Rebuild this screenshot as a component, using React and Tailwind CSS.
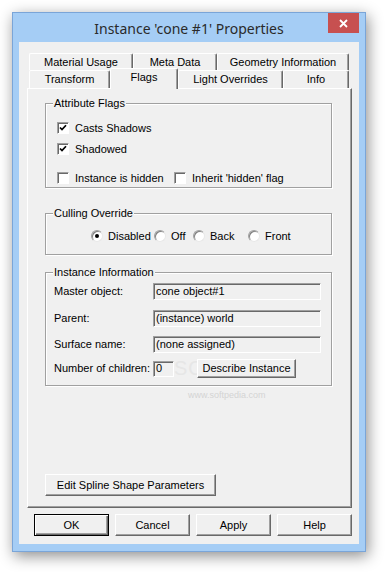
import React from 'react';

// Classic Win32 property sheet inside a Windows 8 frame

const raised =
  'border border-t-white border-l-white border-r-[#696969] border-b-[#696969] shadow-[inset_-1px_-1px_0_#a0a0a0] bg-[#f0f0f0]';
const sunken =
  'border border-t-[#a0a0a0] border-l-[#a0a0a0] border-r-white border-b-white shadow-[inset_1px_1px_0_#696969]';

function CheckBox({ checked, label, className = '' }) {
  return (
    <div className={`flex items-center h-[14px] ${className}`}>
      <div className={`w-[12px] h-[12px] bg-white flex items-center justify-center ${sunken}`}>
        {checked && (
          <svg width="8" height="8" viewBox="0 0 8 8">
            <path d="M1 3.5 L3 5.6 L7 1.2" fill="none" stroke="#000" strokeWidth="1.7" />
          </svg>
        )}
      </div>
      <span className="ml-[6px]">{label}</span>
    </div>
  );
}

function Radio({ checked, label, className = '' }) {
  return (
    <div className={`flex items-center h-[14px] ${className}`}>
      <div className="w-[12px] h-[12px] rounded-full bg-white border border-t-[#a0a0a0] border-l-[#a0a0a0] border-r-[#e8e8e8] border-b-[#e8e8e8] shadow-[inset_1px_1px_0_#808080] flex items-center justify-center">
        {checked && <div className="w-[4px] h-[4px] rounded-full bg-black" />}
      </div>
      <span className="ml-[5px]">{label}</span>
    </div>
  );
}

function GroupBox({ title, className = '', children }) {
  return (
    <div className={`relative w-[287px] border border-[#a0a0a0] shadow-[1px_1px_0_#fff,inset_1px_1px_0_#fff] ${className}`}>
      <span className="absolute -top-[7px] left-[7px] px-[1px] bg-[#f0f0f0] leading-[13px]">{title}</span>
      {children}
    </div>
  );
}

function Field({ value, className = '' }) {
  return (
    <div className={`h-[17px] bg-[#f0f0f0] pl-[2px] flex items-center leading-none ${sunken} ${className}`}>
      {value}
    </div>
  );
}

function Tab({ label, width, selected }) {
  return (
    <div
      className={`flex items-center justify-center border-t border-l border-r border-t-white border-l-white border-r-[#696969] rounded-t-[2px] shadow-[inset_-1px_0_0_#a0a0a0] bg-[#f0f0f0] ${
        selected ? 'h-[21px] -mb-[1px] relative z-10 pb-[3px]' : 'h-full'
      }`}
      style={{ width }}
    >
      {label}
    </div>
  );
}

export default function App() {
  return (
    <div
      className="w-[386px] h-[572px] bg-white pt-[12px] pl-[12px] text-[11px] text-black"
      style={{ fontFamily: '"Liberation Sans", Arial, sans-serif' }}
    >
      {/* Window frame */}
      <div className="w-[354px] h-[540px] border border-[#7aa5d8] bg-[#a5cdf5] shadow-[2px_4px_14px_rgba(0,0,0,0.45)] flex flex-col">
        {/* Title bar */}
        <div className="relative h-[29px] flex items-center justify-center pt-[2px]">
          <span className="text-[14px] text-[#2a2a2a]" style={{ fontFamily: '"Noto Sans", "Open Sans", sans-serif' }}>
            Instance 'cone #1' Properties
          </span>
          <div className="absolute top-0 right-[6px] w-[31px] h-[20px] bg-[#c75050] flex items-center justify-center">
            <svg width="9" height="9" viewBox="0 0 9 9">
              <path d="M1 1 L8 8 M8 1 L1 8" stroke="#fff" strokeWidth="1.8" />
            </svg>
          </div>
        </div>

        {/* Client area */}
        <div className="mx-[6px] h-[502px] bg-[#f0f0f0] pl-[8px] pt-[11px]">
          {/* Tabs */}
          <div className="flex pl-[2px] h-[17px]">
            <Tab label="Material Usage" width={104} />
            <Tab label="Meta Data" width={84} />
            <Tab label="Geometry Information" width={132} />
          </div>
          <div className="flex pl-[2px] h-[18px] items-end">
            <Tab label="Transform" width={81} />
            <Tab label="Flags" width={68} selected />
            <Tab label="Light Overrides" width={105} />
            <Tab label="Info" width={66} />
          </div>

          {/* Tab page */}
          <div className={`relative w-[325px] h-[420px] pl-[17px] pt-[14px] ${raised}`}>
            <GroupBox title="Attribute Flags" className="h-[85px] pl-[11px] pt-[17px]">
              <CheckBox checked label="Casts Shadows" />
              <CheckBox checked label="Shadowed" className="mt-[7px]" />
              <div className="flex mt-[15px]">
                <CheckBox label="Instance is hidden" className="w-[117px]" />
                <CheckBox label="Inherit 'hidden' flag" />
              </div>
            </GroupBox>

            <GroupBox title="Culling Override" className="h-[42px] mt-[25px] pl-[45px] pt-[15px]">
              <div className="flex">
                <Radio checked label="Disabled" className="w-[63px]" />
                <Radio label="Off" className="w-[39px]" />
                <Radio label="Back" className="w-[55px]" />
                <Radio label="Front" />
              </div>
            </GroupBox>

            <GroupBox title="Instance Information" className="h-[114px] mt-[17px] pl-[8px] pt-[10px]">
              <div className="flex items-center h-[17px]">
                <span className="w-[99px]">Master object:</span>
                <Field value="cone object#1" className="w-[168px]" />
              </div>
              <div className="flex items-center h-[17px] mt-[10px]">
                <span className="w-[99px]">Parent:</span>
                <Field value="(instance) world" className="w-[168px]" />
              </div>
              <div className="flex items-center h-[17px] mt-[9px]">
                <span className="w-[99px]">Surface name:</span>
                <Field value="(none assigned)" className="w-[168px]" />
              </div>
              <div className="flex items-center h-[19px] mt-[6px]">
                <span className="w-[99px]">Number of children:</span>
                <Field value="0" className="w-[21px] !h-[16px]" />
                <span className="absolute left-[128px] top-[85px] text-[20px] leading-none tracking-[1px] text-[#e6e6e6] select-none">
                  SOFTPEDIA
                </span>
                <button className={`relative ml-[23px] w-[99px] h-[19px] flex items-center justify-center ${raised}`}>
                  Describe Instance
                </button>
              </div>
            </GroupBox>
            <span className="absolute left-[160px] top-[300px] text-[9px] text-[#d4d4d4] select-none">
              www.softpedia.com
            </span>

            <button className={`mt-[88px] w-[171px] h-[22px] flex items-center justify-center ${raised}`}>
              Edit Spline Shape Parameters
            </button>
          </div>

          {/* Dialog buttons */}
          <div className="flex gap-[6px] mt-[6px] pl-[7px]">
            <button className="w-[75px] h-[22px] border border-black bg-[#f0f0f0] shadow-[inset_1px_1px_0_#fff,inset_-1px_-1px_0_#696969,inset_-2px_-2px_0_#a0a0a0] flex items-center justify-center">
              OK
            </button>
            <button className={`w-[75px] h-[22px] flex items-center justify-center ${raised}`}>Cancel</button>
            <button className={`w-[75px] h-[22px] flex items-center justify-center ${raised}`}>Apply</button>
            <button className={`w-[75px] h-[22px] flex items-center justify-center ${raised}`}>Help</button>
          </div>
        </div>
      </div>
    </div>
  );
}
